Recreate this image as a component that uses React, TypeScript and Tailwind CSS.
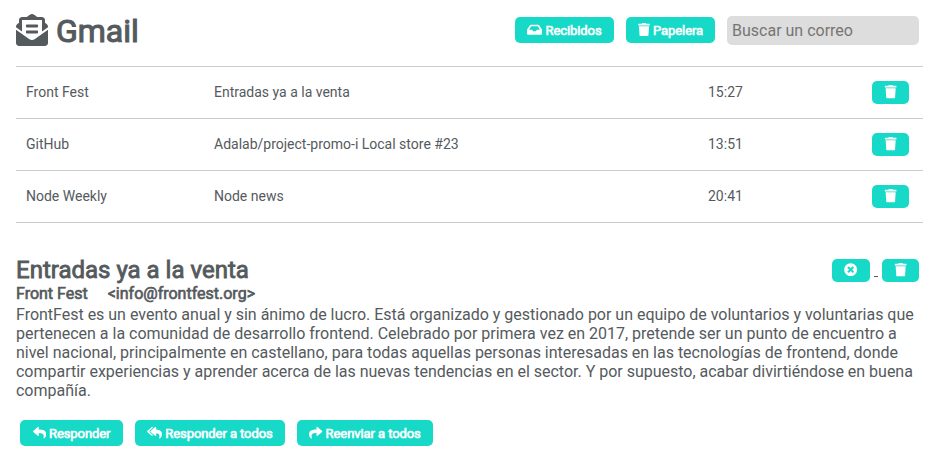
import type { ReactNode } from 'react';
import {
  FaEnvelopeOpenText,
  FaInbox,
  FaReply,
  FaReplyAll,
  FaShare,
  FaTimesCircle,
  FaTrash,
} from 'react-icons/fa';

const emails = [
  { from: 'Front Fest', subject: 'Entradas ya a la venta', time: '15:27' },
  { from: 'GitHub', subject: 'Adalab/project-promo-i Local store #23', time: '13:51' },
  { from: 'Node Weekly', subject: 'Node news', time: '20:41' },
];

function TextButton({ icon, label, width }: { icon: ReactNode; label: string; width: string }) {
  return (
    <button
      className={`flex h-[26px] shrink-0 items-center justify-center gap-[3px] whitespace-nowrap rounded-[5px] bg-[#16dac7] text-[13.333px] leading-4 text-white ${width}`}
    >
      {icon}
      <span className="pt-px text-[13px] tracking-[-0.08px] [-webkit-text-stroke:0.6px_white]">{label}</span>
    </button>
  );
}

function IconButton({ icon, label, width }: { icon: ReactNode; label: string; width: string }) {
  return (
    <button
      aria-label={label}
      className={`flex h-[23px] shrink-0 items-center justify-center rounded-[5px] bg-[#16dac7] pb-px text-[13.333px] text-white ${width}`}
    >
      {icon}
    </button>
  );
}

export default function App() {
  return (
    <div className="h-[466px] overflow-hidden bg-white pl-4 font-['Roboto',sans-serif] text-[#555a5d]">
      <header className="flex h-[66px] items-start">
        <FaEnvelopeOpenText className="mt-[14px] size-8" />
        <h1 className="ml-2 mt-3 text-[32px] leading-[38px] [-webkit-text-stroke:1.1px_#555a5d]">Gmail</h1>
        <div className="ml-auto mr-[17px] flex items-start gap-3 pt-4">
          <div className="flex gap-3 pt-px">
            <TextButton icon={<FaInbox className="h-[13.333px] w-[15px]" preserveAspectRatio="xMidYMid" />} label="Recibidos" width="w-[99px]" />
            <TextButton icon={<FaTrash className="mb-px h-[13.333px] w-3" />} label="Papelera" width="w-[89px]" />
          </div>
          <input
            type="text"
            placeholder="Buscar un correo"
            className="h-[29px] w-48 rounded-[5px] bg-[#dddddd] px-[5px] text-base placeholder:text-[#757575]"
          />
        </div>
      </header>

      <ul className="mr-[13px] border-t border-[#cccccc] text-sm">
        {emails.map((email) => (
          <li key={email.from} className="flex h-[52px] items-center border-b border-[#cccccc] pl-[10px] pr-[14px]">
            <span className="w-[188px] pb-0.5">{email.from}</span>
            <span className="w-[494px] pb-0.5">{email.subject}</span>
            <span className="pb-0.5">{email.time}</span>
            <div className="ml-auto">
              <IconButton icon={<FaTrash />} label="Borrar" width="w-[37px]" />
            </div>
          </li>
        ))}
      </ul>

      <section className="mr-[17px] pt-[33px]">
        <div className="flex h-[28px] items-start justify-between">
          <h2 className="text-2xl leading-[28px] [-webkit-text-stroke:0.85px_#555a5d]">Entradas ya a la venta</h2>
          <div className="flex items-start gap-1 pt-[3px]">
            <IconButton icon={<FaTimesCircle />} label="Cerrar" width="w-[38px]" />
            <span className="mt-[17px] h-px w-1 bg-[#555a5d]" />
            <IconButton icon={<FaTrash />} label="Borrar" width="w-[37px]" />
          </div>
        </div>
        <h3 className="flex gap-5 text-base leading-[19px] [-webkit-text-stroke:0.65px_#555a5d]">
          <span>Front Fest</span>
          <span>&lt;info@frontfest.org&gt;</span>
        </h3>
        <p className="mt-[2px] text-base leading-[19px] tracking-[-0.01px]">
          FrontFest es un evento anual y sin ánimo de lucro. Está organizado y gestionado por un equipo de voluntarios y
          voluntarias que pertenecen a la comunidad de desarrollo frontend. Celebrado por primera vez en 2017, pretende
          ser un punto de encuentro a nivel nacional, principalmente en castellano, para todas aquellas personas
          interesadas en las tecnologías de frontend, donde compartir experiencias y aprender acerca de las nuevas
          tendencias en el sector. Y por supuesto, acabar divirtiéndose en buena compañía.
        </p>
      </section>

      <footer className="flex gap-3 pl-1 pt-5">
        <TextButton icon={<FaReply />} label="Responder" width="w-[103px]" />
        <TextButton
          icon={<FaReplyAll className="h-[13.333px] w-[15px]" viewBox="0 0 576 512" />}
          label="Responder a todos"
          width="w-[150px]"
        />
        <TextButton icon={<FaShare />} label="Reenviar a todos" width="w-[136px]" />
      </footer>
    </div>
  );
}
